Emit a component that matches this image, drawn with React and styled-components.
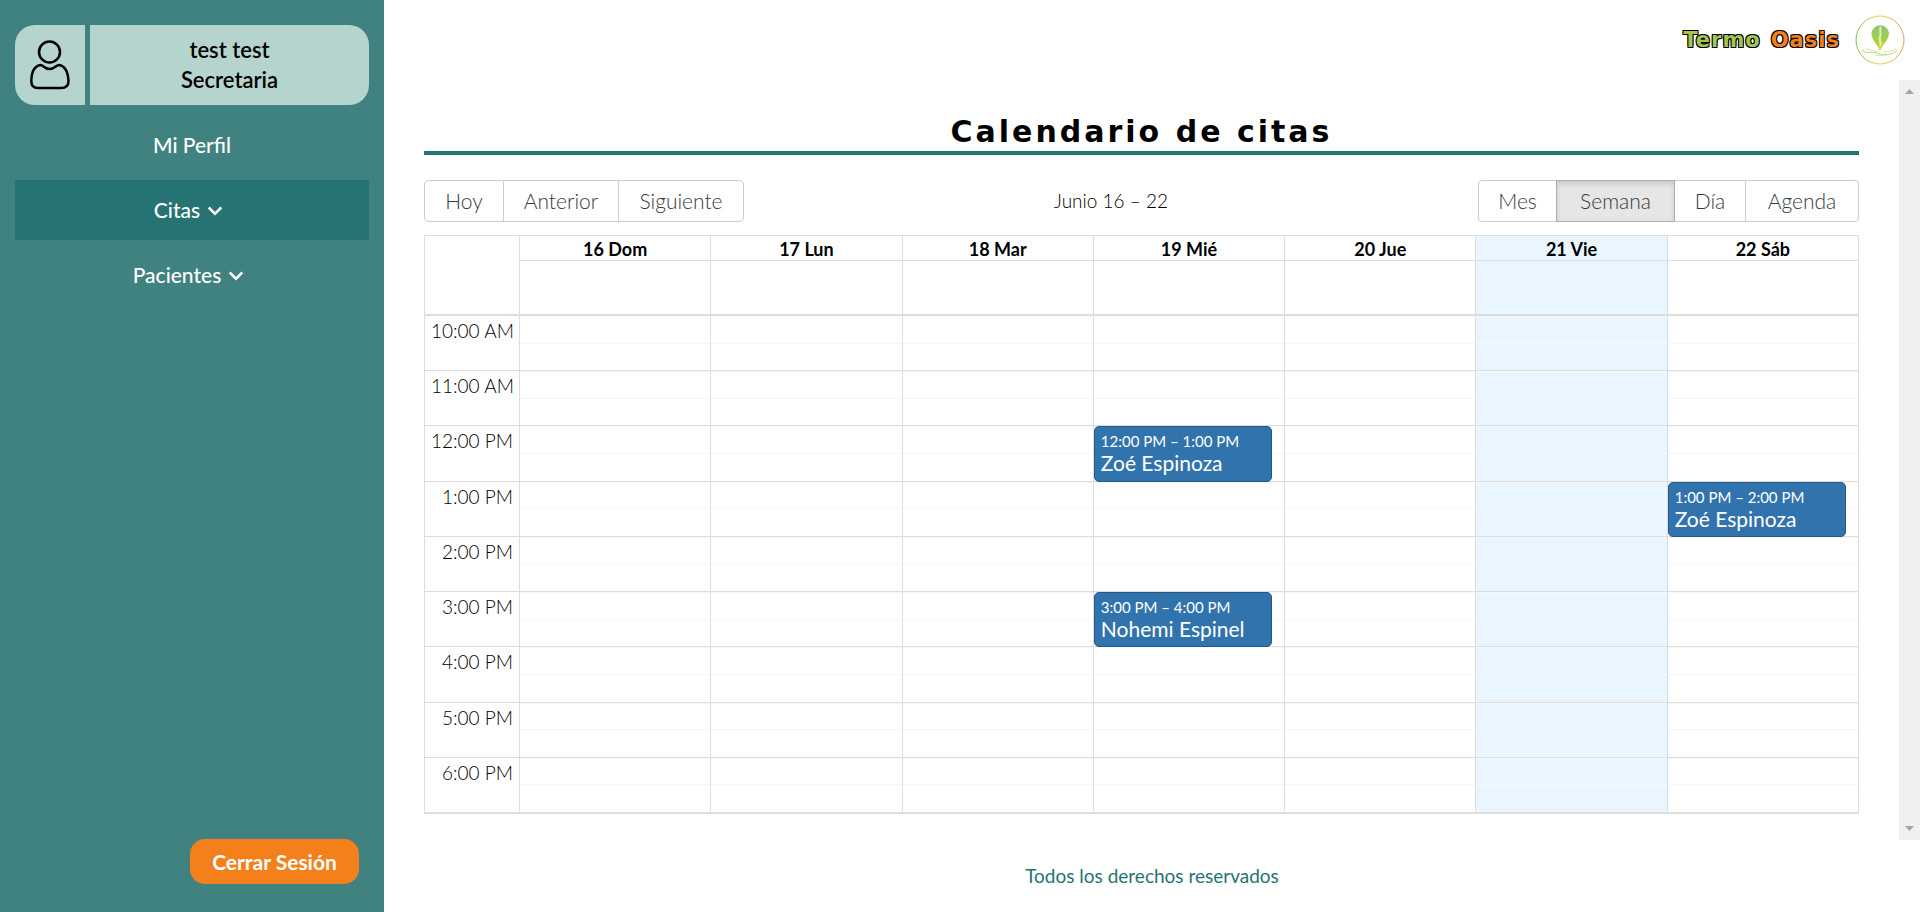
import React from "react";
import styled, { createGlobalStyle } from "styled-components";
import { BiChevronDown } from "react-icons/bi";

const GlobalStyle = createGlobalStyle`
  *, *::before, *::after { box-sizing: border-box; }
  body {
    margin: 0;
    background: #fff;
    color: #000;
    font-family: Lato, "Open Sans", sans-serif;
    font-size: 21px;
    font-weight: 300;
    line-height: 30px;
  }
  button { font: inherit; cursor: pointer; }
`;

const Page = styled.div`
  display: grid;
  grid-template-columns: 1fr 4fr;
  min-height: 100vh;
`;

const Sidebar = styled.aside`
  display: flex;
  flex-direction: column;
  padding: 25px 15px 28px;
  background: #408280;
`;

const Profile = styled.div`
  display: flex;
  gap: 5px;
  height: 80px;
  border-radius: 20px;
  overflow: hidden;
`;

const Avatar = styled.div`
  display: flex;
  align-items: center;
  justify-content: center;
  width: 70px;
  background: #b6d4ce;
`;

const ProfileText = styled.div`
  flex: 1;
  display: flex;
  flex-direction: column;
  justify-content: center;
  background: #b6d4ce;
  text-align: center;
  font-size: 22px;
  font-weight: 600;
`;

const Menu = styled.nav`
  display: flex;
  flex-direction: column;
  gap: 5px;
  margin-top: 10px;
`;

const MenuLink = styled.a`
  display: flex;
  align-items: center;
  justify-content: center;
  height: 60px;
  color: #fff;
  font-weight: 500;
  text-decoration: none;
  background: ${(p) => (p.$active ? "#257372" : "transparent")};
`;

const LogoutButton = styled.button`
  align-self: flex-end;
  width: 169px;
  height: 45px;
  margin: auto 10px 0 0;
  padding: 0;
  border: 0;
  border-radius: 15px;
  background: #f4801c;
  color: #fff;
  font-weight: 700;
`;

const Main = styled.div`
  display: flex;
  flex-direction: column;
  min-width: 0;
`;

const TopBar = styled.header`
  display: flex;
  align-items: center;
  justify-content: flex-end;
  gap: 15px;
  height: 80px;
  padding: 0 15px;
`;

const Brand = styled.div`
  display: flex;
  gap: 10px;
  font-family: "DejaVu Sans", sans-serif;
  font-size: 21px;
  font-weight: 700;
  letter-spacing: 1px;
`;

const BrandWord = styled.span`
  color: ${(p) => p.$color};
  text-shadow: -1px -1px 0 #000, 1px -1px 0 #000, -1px 1px 0 #000, 1px 1px 0 #000;
`;

const Body = styled.div`
  flex: 1;
  display: flex;
`;

const Content = styled.main`
  flex: 1;
  display: flex;
  flex-direction: column;
  padding: 32px 40px 26px;
`;

const ScrollTrack = styled.div`
  display: flex;
  flex-direction: column;
  align-items: center;
  justify-content: space-between;
  width: 21px;
  padding: 9px 0;
  background: #f0f0f0;
`;

const Title = styled.h1`
  margin: 0 0 25px;
  border-bottom: 4px solid #257372;
  font-family: "DejaVu Sans", sans-serif;
  font-size: 30px;
  font-weight: 700;
  line-height: 39px;
  letter-spacing: 3px;
  text-align: center;
`;

const Toolbar = styled.div`
  display: flex;
  align-items: center;
  margin-bottom: 13px;
`;

const ButtonGroup = styled.div`
  display: flex;
  border: 1px solid #ccc;
  border-radius: 4px;
`;

const ToolButton = styled.button`
  width: ${(p) => p.$width}px;
  height: 40px;
  padding: 0;
  border: 0;
  border-left: ${(p) => (p.$first ? "0" : "1px solid #ccc")};
  background: transparent;
  color: #373a3c;

  &[aria-pressed="true"] {
    height: 42px;
    margin: -1px 0;
    border: 1px solid #adadad;
    background: #e6e6e6;
    box-shadow: inset 0 3px 5px rgba(0, 0, 0, 0.125);
  }
`;

const RangeLabel = styled.span`
  flex: 1;
  font-size: 19px;
  text-align: center;
`;

const Calendar = styled.table`
  flex: 1;
  display: flex;
  flex-direction: column;
  border: 1px solid #ddd;
`;

const Head = styled.thead`
  display: block;
  border-bottom: 2px solid #ddd;
`;

const Hours = styled.tbody`
  flex: 1;
  display: flex;
  flex-direction: column;
`;

const Row = styled.tr`
  flex: 1 0 auto;
  display: grid;
  grid-template-columns: 94px repeat(7, 1fr);
`;

const HeadGutter = styled.td`
  display: block;
  padding: 0;
`;

const DayName = styled.th`
  display: block;
  height: 25px;
  padding: 0;
  border-left: 1px solid #ddd;
  border-bottom: 1px solid #ddd;
  background: ${(p) => (p.$today ? "#eaf6ff" : "transparent")};
  font-size: 18px;
  font-weight: 700;
  line-height: 26px;
`;

const AllDay = styled.td`
  display: block;
  height: 53px;
  padding: 0;
  border-left: 1px solid #ddd;
  background: ${(p) => (p.$today ? "#eaf6ff" : "transparent")};
`;

const HourLabel = styled.th`
  display: block;
  min-height: 55px;
  padding: 0 6px;
  border-bottom: 1px solid #ddd;
  font-size: 19px;
  font-weight: 300;
  text-align: right;
  white-space: nowrap;
`;

const Slot = styled.td`
  display: flex;
  min-width: 0;
  padding: 0 12px 0 0;
  border-left: 1px solid #ddd;
  border-bottom: 1px solid #ddd;
  background-color: ${(p) => (p.$today ? "#eaf6ff" : "transparent")};
  background-image: linear-gradient(#f7f7f7, #f7f7f7), linear-gradient(#f7f7f7, #f7f7f7);
  background-position: 0 0, 0 50%;
  background-size: 100% 1px;
  background-repeat: no-repeat;
`;

const Event = styled.button`
  flex: 1;
  display: flex;
  flex-direction: column;
  align-items: flex-start;
  margin-bottom: -1px;
  padding: 4px 6px 0;
  border: 1px solid #265985;
  border-radius: 5px;
  background: #3174ad;
  color: #fff;
  line-height: 21px;
  font-weight: 400;
  white-space: nowrap;
`;

const EventTime = styled.span`
  font-size: 15px;
`;

const Footer = styled.footer`
  display: flex;
  align-items: center;
  justify-content: center;
  height: 72px;
  color: #257372;
  font-size: 19px;
  font-weight: 400;
`;

const UserIcon = () => (
  <svg width="40" height="50" viewBox="0 0 40 50" fill="none" stroke="#000" strokeWidth="2.5" aria-hidden="true">
    <circle cx="19.5" cy="12" r="10.5" />
    <path d="M10.500 25C4 26 1.500 32 1.300 41C1.300 46 3.500 48 8 48H31C36 48 38.500 46 38.500 41C38 32 35.500 26 29 25C26 25 25 29 19.500 29C14 29 13.500 25 10.500 25Z" />
  </svg>
);

const Logo = () => (
  <svg width="50" height="50" viewBox="0 0 50 50" fill="none" role="img" aria-label="Termo Oasis">
    <defs>
      <linearGradient id="ring">
        <stop offset="0" stopColor="#7cc142" />
        <stop offset="0.5" stopColor="#e6d94a" />
        <stop offset="1" stopColor="#d9a05a" />
      </linearGradient>
      <linearGradient id="drop" x1="0" y1="0" x2="0" y2="1">
        <stop offset="0" stopColor="#8cc878" />
        <stop offset="0.6" stopColor="#a9cf3f" />
        <stop offset="1" stopColor="#e3dc3c" />
      </linearGradient>
    </defs>
    <circle cx="25" cy="25" r="24" stroke="url(#ring)" />
    <path d="M25 36C22 29 16.500 25 16.500 18A8.800 8.800 0 0 1 34 18C34 25 28 29 25 36Z" fill="url(#drop)" />
    <path d="M26 12C23.500 15 27 18 25 22C24 25 26 27 25.500 31" stroke="#dff0c4" strokeWidth="2" />
    <path d="M8 34C6 37 13 38 20 37.500C26 40 39 41 42 35" stroke="#b4d67c" />
    <path d="M11 33C13 36 20 35 22 37M29 37C34 36 39 37 41 33M20 40C26 41 33 40 36 39" stroke="#d3e49a" />
  </svg>
);

const Arrow = ({ down }) => (
  <svg width="9" height="5" viewBox="0 0 9 5" fill="#a3a3a3" aria-hidden="true">
    <path d={down ? "M0 0H9L4.500 5Z" : "M0 5H9L4.500 0Z"} />
  </svg>
);

const days = ["16 Dom", "17 Lun", "18 Mar", "19 Mié", "20 Jue", "21 Vie", "22 Sáb"];
const TODAY = 5;

const hours = [
  "10:00 AM", "11:00 AM", "12:00 PM", "1:00 PM", "2:00 PM",
  "3:00 PM", "4:00 PM", "5:00 PM", "6:00 PM",
];

const events = [
  { day: 3, hour: "12:00 PM", time: "12:00 PM – 1:00 PM", name: "Zoé Espinoza" },
  { day: 6, hour: "1:00 PM", time: "1:00 PM – 2:00 PM", name: "Zoé Espinoza" },
  { day: 3, hour: "3:00 PM", time: "3:00 PM – 4:00 PM", name: "Nohemi Espinel" },
];

const navigation = [
  { label: "Hoy", width: 78 },
  { label: "Anterior", width: 115 },
  { label: "Siguiente", width: 125 },
];

const views = [
  { label: "Mes", width: 77 },
  { label: "Semana", width: 119, pressed: true },
  { label: "Día", width: 70 },
  { label: "Agenda", width: 113 },
];

export default function App() {
  return (
    <>
      <GlobalStyle />
      <Page>
        <Sidebar>
          <Profile>
            <Avatar><UserIcon /></Avatar>
            <ProfileText>
              <span>test test</span>
              <span>Secretaria</span>
            </ProfileText>
          </Profile>
          <Menu>
            <MenuLink href="#perfil">Mi Perfil</MenuLink>
            <MenuLink href="#citas" $active>Citas<BiChevronDown size={30} /></MenuLink>
            <MenuLink href="#pacientes">Pacientes<BiChevronDown size={30} /></MenuLink>
          </Menu>
          <LogoutButton type="button">Cerrar Sesión</LogoutButton>
        </Sidebar>
        <Main>
          <TopBar>
            <Brand>
              <BrandWord $color="#a3c64d">Termo</BrandWord>
              <BrandWord $color="#f4801c">Oasis</BrandWord>
            </Brand>
            <Logo />
          </TopBar>
          <Body>
            <Content>
              <Title>Calendario de citas</Title>
              <Toolbar>
                <ButtonGroup>
                  {navigation.map((b, i) => (
                    <ToolButton key={b.label} type="button" $width={b.width} $first={i === 0}>
                      {b.label}
                    </ToolButton>
                  ))}
                </ButtonGroup>
                <RangeLabel>Junio 16 – 22</RangeLabel>
                <ButtonGroup>
                  {views.map((b, i) => (
                    <ToolButton
                      key={b.label}
                      type="button"
                      aria-pressed={!!b.pressed}
                      $width={b.width}
                      $first={i === 0 || views[i - 1].pressed}
                    >
                      {b.label}
                    </ToolButton>
                  ))}
                </ButtonGroup>
              </Toolbar>
              <Calendar>
                <Head>
                  <Row>
                    <HeadGutter />
                    {days.map((d, i) => (
                      <DayName key={d} scope="col" $today={i === TODAY}>{d}</DayName>
                    ))}
                  </Row>
                  <Row>
                    <HeadGutter />
                    {days.map((d, i) => <AllDay key={d} $today={i === TODAY} />)}
                  </Row>
                </Head>
                <Hours>
                  {hours.map((h) => (
                    <Row key={h}>
                      <HourLabel scope="row">{h}</HourLabel>
                      {days.map((d, i) => {
                        const event = events.find((e) => e.day === i && e.hour === h);
                        return (
                          <Slot key={d} $today={i === TODAY}>
                            {event && (
                              <Event type="button">
                                <EventTime>{event.time}</EventTime>
                                <span>{event.name}</span>
                              </Event>
                            )}
                          </Slot>
                        );
                      })}
                    </Row>
                  ))}
                </Hours>
              </Calendar>
            </Content>
            <ScrollTrack>
              <Arrow />
              <Arrow down />
            </ScrollTrack>
          </Body>
          <Footer>Todos los derechos reservados</Footer>
        </Main>
      </Page>
    </>
  );
}
